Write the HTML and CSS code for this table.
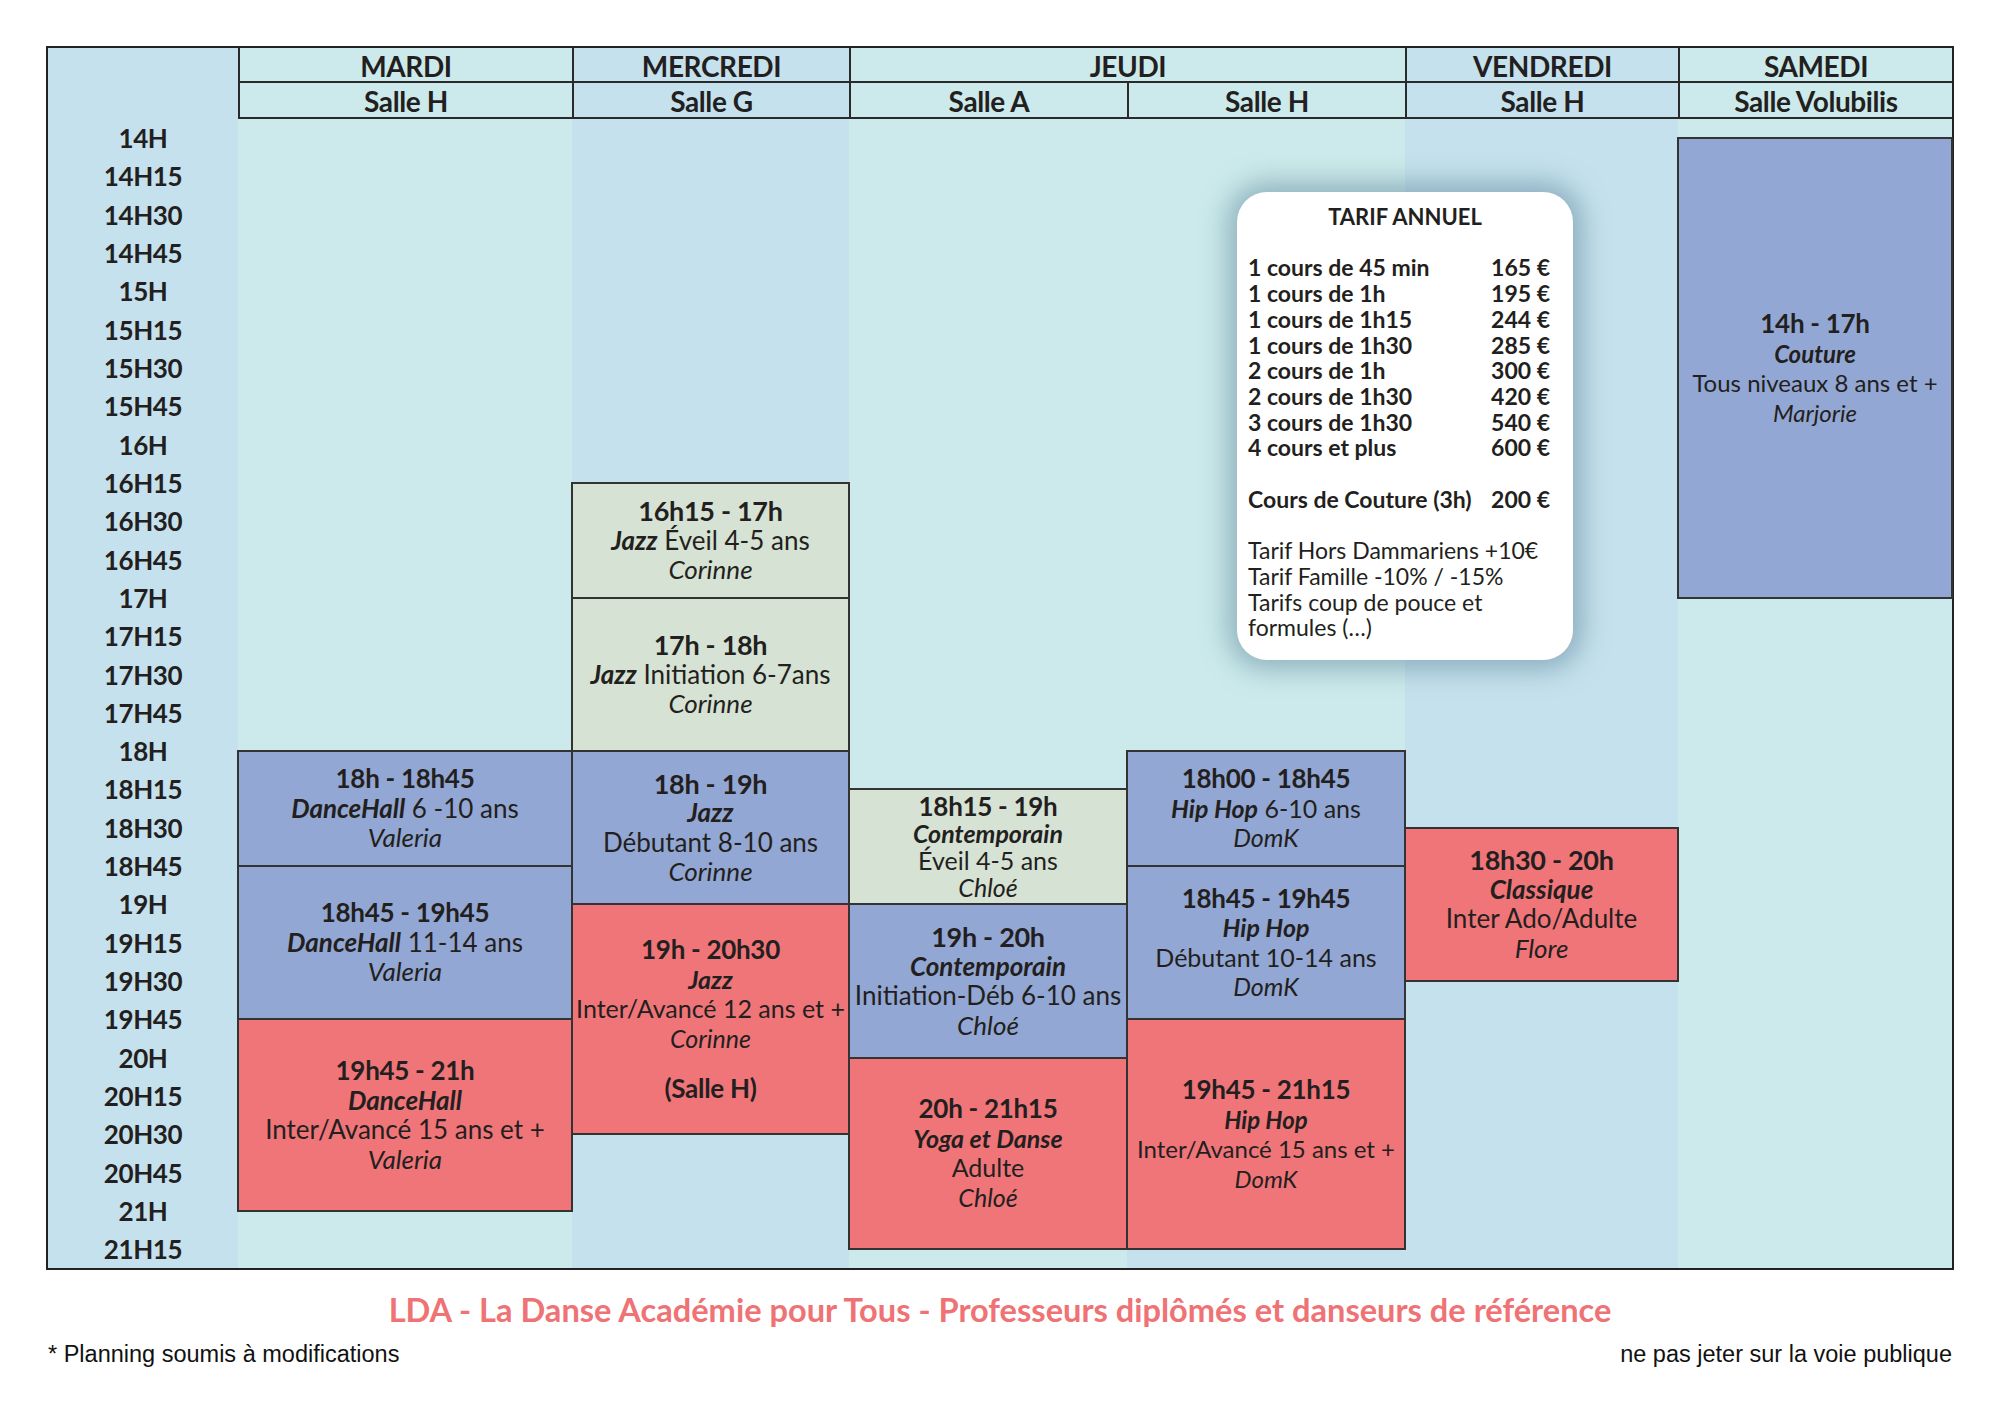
FILE: index.html
```html
<!DOCTYPE html>
<html lang="fr">
<head>
<meta charset="utf-8">
<title>Planning LDA</title>
<link rel="stylesheet" href="styles.css">
</head>
<body>
<div class="page">
  <div class="schedule">
    <div class="corner"></div>

    <div class="hd day c2 light">MARDI</div>
    <div class="hd day c3 blue">MERCREDI</div>
    <div class="hd day c45 light">JEUDI</div>
    <div class="hd day c6 blue">VENDREDI</div>
    <div class="hd day c7 light">SAMEDI</div>

    <div class="hd room c2 light">Salle H</div>
    <div class="hd room c3 blue">Salle G</div>
    <div class="hd room c4 light">Salle A</div>
    <div class="hd room c5 light">Salle H</div>
    <div class="hd room c6 blue">Salle H</div>
    <div class="hd room c7 light">Salle Volubilis</div>

    <div class="colbg c1 blue"></div>
    <div class="colbg c2 light"></div>
    <div class="colbg c3 blue"></div>
    <div class="colbg c4 light"></div>
    <div class="colbg c5 mixed"></div>
    <div class="colbg c6 blue"></div>
    <div class="colbg c7 light"></div>

    <div class="tm" style="grid-row: 3 / span 2">14H</div>
    <div class="tm" style="grid-row: 5 / span 2">14H15</div>
    <div class="tm" style="grid-row: 7 / span 2">14H30</div>
    <div class="tm" style="grid-row: 9 / span 2">14H45</div>
    <div class="tm" style="grid-row: 11 / span 2">15H</div>
    <div class="tm" style="grid-row: 13 / span 2">15H15</div>
    <div class="tm" style="grid-row: 15 / span 2">15H30</div>
    <div class="tm" style="grid-row: 17 / span 2">15H45</div>
    <div class="tm" style="grid-row: 19 / span 2">16H</div>
    <div class="tm" style="grid-row: 21 / span 2">16H15</div>
    <div class="tm" style="grid-row: 23 / span 2">16H30</div>
    <div class="tm" style="grid-row: 25 / span 2">16H45</div>
    <div class="tm" style="grid-row: 27 / span 2">17H</div>
    <div class="tm" style="grid-row: 29 / span 2">17H15</div>
    <div class="tm" style="grid-row: 31 / span 2">17H30</div>
    <div class="tm" style="grid-row: 33 / span 2">17H45</div>
    <div class="tm" style="grid-row: 35 / span 2">18H</div>
    <div class="tm" style="grid-row: 37 / span 2">18H15</div>
    <div class="tm" style="grid-row: 39 / span 2">18H30</div>
    <div class="tm" style="grid-row: 41 / span 2">18H45</div>
    <div class="tm" style="grid-row: 43 / span 2">19H</div>
    <div class="tm" style="grid-row: 45 / span 2">19H15</div>
    <div class="tm" style="grid-row: 47 / span 2">19H30</div>
    <div class="tm" style="grid-row: 49 / span 2">19H45</div>
    <div class="tm" style="grid-row: 51 / span 2">20H</div>
    <div class="tm" style="grid-row: 53 / span 2">20H15</div>
    <div class="tm" style="grid-row: 55 / span 2">20H30</div>
    <div class="tm" style="grid-row: 57 / span 2">20H45</div>
    <div class="tm" style="grid-row: 59 / span 2">21H</div>
    <div class="tm" style="grid-row: 61 / span 2">21H15</div>

    <!-- MARDI -->
    <div class="ev c2 ev-blue big" style="grid-row: 36 / 42">
      <span class="t">18h - 18h45</span>
      <span><b><i>DanceHall</i></b> 6 -10 ans</span>
      <span><i>Valeria</i></span>
    </div>
    <div class="ev c2 ev-blue big" style="grid-row: 42 / 50">
      <span class="t">18h45 - 19h45</span>
      <span><b><i>DanceHall</i></b> 11-14 ans</span>
      <span><i>Valeria</i></span>
    </div>
    <div class="ev c2 ev-red big" style="grid-row: 50 / 60">
      <span class="t">19h45 - 21h</span>
      <span><b><i>DanceHall</i></b></span>
      <span>Inter/Avancé 15 ans et +</span>
      <span><i>Valeria</i></span>
    </div>

    <!-- MERCREDI -->
    <div class="ev c3 ev-green wide" style="grid-row: 22 / 28">
      <span class="t">16h15 - 17h</span>
      <span><b><i>Jazz</i></b> Éveil 4-5 ans</span>
      <span><i>Corinne</i></span>
    </div>
    <div class="ev c3 ev-green wide" style="grid-row: 28 / 36">
      <span class="t">17h - 18h</span>
      <span><b><i>Jazz</i></b> Initiation 6-7ans</span>
      <span><i>Corinne</i></span>
    </div>
    <div class="ev c3 ev-blue wide" style="grid-row: 36 / 44">
      <span class="t">18h - 19h</span>
      <span><b><i>Jazz</i></b></span>
      <span>Débutant 8-10 ans</span>
      <span><i>Corinne</i></span>
    </div>
    <div class="ev c3 ev-red mid" style="grid-row: 44 / 56">
      <span class="t">19h - 20h30</span>
      <span><b><i>Jazz</i></b></span>
      <span>Inter/Avancé 12 ans et +</span>
      <span><i>Corinne</i></span>
      <span class="t gap">(Salle H)</span>
    </div>

    <!-- JEUDI Salle A -->
    <div class="ev c4 ev-green tight" style="grid-row: 38 / 44">
      <span class="t">18h15 - 19h</span>
      <span><b><i>Contemporain</i></b></span>
      <span>Éveil 4-5 ans</span>
      <span><i>Chloé</i></span>
    </div>
    <div class="ev c4 ev-blue wide" style="grid-row: 44 / 52">
      <span class="t">19h - 20h</span>
      <span><b><i>Contemporain</i></b></span>
      <span>Initiation-Déb 6-10 ans</span>
      <span><i>Chloé</i></span>
    </div>
    <div class="ev c4 ev-red mid" style="grid-row: 52 / 62">
      <span class="t">20h - 21h15</span>
      <span><b><i>Yoga et Danse</i></b></span>
      <span>Adulte</span>
      <span><i>Chloé</i></span>
    </div>

    <!-- JEUDI Salle H -->
    <div class="ev c5 ev-blue mid" style="grid-row: 36 / 42">
      <span class="t">18h00 - 18h45</span>
      <span><b><i>Hip Hop</i></b> 6-10 ans</span>
      <span><i>DomK</i></span>
    </div>
    <div class="ev c5 ev-blue mid" style="grid-row: 42 / 50">
      <span class="t">18h45 - 19h45</span>
      <span><b><i>Hip Hop</i></b></span>
      <span>Débutant 10-14 ans</span>
      <span><i>DomK</i></span>
    </div>
    <div class="ev c5 ev-red" style="grid-row: 50 / 62">
      <span class="t">19h45 - 21h15</span>
      <span><b><i>Hip Hop</i></b></span>
      <span>Inter/Avancé 15 ans et +</span>
      <span><i>DomK</i></span>
    </div>

    <!-- VENDREDI -->
    <div class="ev c6 ev-red wide" style="grid-row: 40 / 48">
      <span class="t">18h30 - 20h</span>
      <span><b><i>Classique</i></b></span>
      <span>Inter Ado/Adulte</span>
      <span><i>Flore</i></span>
    </div>

    <!-- SAMEDI -->
    <div class="ev c7 ev-blue" style="grid-row: 4 / 28">
      <span class="t">14h - 17h</span>
      <span><b><i>Couture</i></b></span>
      <span>Tous niveaux 8 ans et +</span>
      <span><i>Marjorie</i></span>
    </div>

    <div class="tarif">
      <div class="tarif-title">TARIF ANNUEL</div>
      <div class="rates">
        <span>1 cours de 45 min</span><span class="price">165 €</span>
        <span>1 cours de 1h</span><span class="price">195 €</span>
        <span>1 cours de 1h15</span><span class="price">244 €</span>
        <span>1 cours de 1h30</span><span class="price">285 €</span>
        <span>2 cours de 1h</span><span class="price">300 €</span>
        <span>2 cours de 1h30</span><span class="price">420 €</span>
        <span>3 cours de 1h30</span><span class="price">540 €</span>
        <span>4 cours et plus</span><span class="price">600 €</span>
      </div>
      <div class="rates couture">
        <span>Cours de Couture (3h)</span><span class="price">200 €</span>
      </div>
      <div class="tarif-notes">
        Tarif Hors Dammariens +10€<br>
        Tarif Famille -10% / -15%<br>
        Tarifs coup de pouce et<br>
        formules (…)
      </div>
    </div>
  </div>

  <div class="footer-title">LDA - La Danse Académie pour Tous - Professeurs diplômés et danseurs de référence</div>
  <div class="footer-notes">
    <span>* Planning soumis à modifications</span>
    <span>ne pas jeter sur la voie publique</span>
  </div>
</div>
</body>
</html>
```

FILE: styles.css
```css
html, body {
  margin: 0;
  background: #ffffff;
}

body {
  font-family: Lato, "Noto Sans", sans-serif;
  color: #231f20;
}

.page {
  width: 1908px;
  margin-left: 46px;
  padding-top: 46px;
}

.schedule {
  position: relative;
  display: grid;
  grid-template-columns: 190px 334px 277px 278px 278px 273px 274px;
  grid-template-rows: 35px 36px repeat(60, 19.1667px);
  width: 1904px;
  border: 2px solid #222;
}

.light { background: #cceaeb; }
.blue { background: #c5e1ed; }
.mixed { background: linear-gradient(#cceaeb 0, #cceaeb 900px, #c5e1ed 900px); }

.c1 { grid-column: 1; }
.c2 { grid-column: 2; }
.c3 { grid-column: 3; }
.c4 { grid-column: 4; }
.c5 { grid-column: 5; }
.c45 { grid-column: 4 / 6; }
.c6 { grid-column: 6; }
.c7 { grid-column: 7; }

.corner {
  grid-column: 1;
  grid-row: 1 / 3;
  background: #c5e1ed;
}

.hd {
  display: flex;
  align-items: center;
  justify-content: center;
  border-left: 2px solid #2a2a2a;
  border-bottom: 2px solid #2a2a2a;
  font-weight: 700;
  font-size: 28px;
  line-height: 1;
  letter-spacing: -0.4px;
  white-space: nowrap;
}

.day { grid-row: 1; padding-top: 2px; }
.room { grid-row: 2; padding-top: 1px; }

.colbg { grid-row: 3 / 63; }

.tm {
  grid-column: 1;
  display: flex;
  align-items: center;
  justify-content: center;
  font-weight: 700;
  font-size: 26px;
  letter-spacing: -0.4px;
  line-height: 1;
  z-index: 1;
}

.ev {
  margin: -1px;
  border: 2px solid #333;
  display: flex;
  flex-direction: column;
  justify-content: center;
  align-items: center;
  text-align: center;
  font-size: 24px;
  line-height: 29.5px;
  white-space: nowrap;
  z-index: 1;
}

.ev span { display: block; }
.ev .t { font-weight: 700; font-size: 26px; letter-spacing: -0.3px; }
.ev b { font-weight: 700; }
.ev .gap { margin-top: 21px; }

.ev.big { font-size: 26px; }
.ev.mid { font-size: 25px; }
.ev.wide { font-size: 26px; }
.ev.wide .t { font-size: 27px; }
.ev.tight { line-height: 27px; font-size: 25px; }

.ev-blue { background: #92a7d3; }
.ev-red { background: #f07578; }
.ev-green { background: #d6e2d3; }

.tarif {
  position: absolute;
  left: 1189px;
  top: 144px;
  width: 336px;
  height: 468px;
  box-sizing: border-box;
  padding: 12px 23px 0 11px;
  background: #ffffff;
  border-radius: 30px;
  box-shadow: 0 0 26px 10px rgba(88, 128, 150, 0.5);
  font-size: 23px;
  line-height: 25.7px;
  z-index: 2;
}

.tarif-title {
  text-align: center;
  font-weight: 700;
  font-size: 22px;
  margin-bottom: 25.7px;
  padding-left: 12px;
}

.rates {
  display: grid;
  grid-template-columns: 1fr auto;
  font-weight: 700;
  white-space: nowrap;
}

.price { text-align: right; }

.couture { margin-top: 25.7px; }

.tarif-notes {
  margin-top: 25.7px;
  font-weight: 400;
}

.footer-title {
  margin-top: 20px;
  text-align: center;
  color: #ef7275;
  font-size: 32.6px;
  font-weight: 700;
  line-height: 40px;
  white-space: nowrap;
}

.footer-notes {
  display: flex;
  justify-content: space-between;
  margin-top: 11px;
  padding: 0 2px;
  font-family: "Liberation Sans", Arial, sans-serif;
  font-size: 23.5px;
  line-height: 26px;
  color: #111;
}
```
